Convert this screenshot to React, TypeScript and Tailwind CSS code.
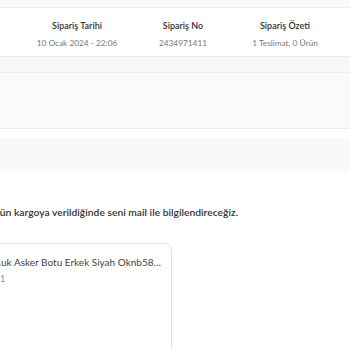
import React from "react";

function App() {
    const font = { fontFamily: "'Source Sans Pro', Lato, 'Noto Sans', sans-serif" };
    return (
        <div className="w-[350px] h-[350px] overflow-hidden bg-[#fafafa]" style={font}>
            <div className="h-[7px]"></div>
            <div className="h-[50px] bg-white border-y border-[#ebebeb] relative">
                <div className="absolute left-[27px] top-[11px] w-[100px] text-center">
                    <div className="text-[9px] font-semibold text-[#333]">Sipariş Tarihi</div>
                    <div className="text-[8.3px] text-[#777] mt-[4px]">10 Ocak 2024 - 22:06</div>
                </div>
                <div className="absolute left-[133px] top-[11px] w-[100px] text-center">
                    <div className="text-[9px] font-semibold text-[#333]">Sipariş No</div>
                    <div className="text-[8.3px] text-[#777] mt-[4px]">2434971411</div>
                </div>
                <div className="absolute left-[235px] top-[11px] w-[100px] text-center">
                    <div className="text-[9px] font-semibold text-[#333]">Sipariş Özeti</div>
                    <div className="text-[8.3px] text-[#777] mt-[4px]">1 Teslimat, 0 Ürün</div>
                </div>
            </div>
            <div className="h-[15px] bg-[#f8f8f8]"></div>
            <div className="h-[57px] bg-[#fafafa] border-y border-[#ebebeb]"></div>
            <div className="bg-white">
                <div className="h-[10px]"></div>
                <div className="h-[32px] bg-[#f9f9f9]"></div>
                <div className="h-[180px] overflow-hidden">
                    <div className="mt-[34px] -ml-[23px] whitespace-nowrap text-[10.3px] leading-[14px] font-semibold text-[#333]">
                        Ürünün kargoya verildiğinde seni mail ile bilgilendireceğiz.
                    </div>
                    <div className="mt-[24px] -ml-[20px] w-[192px] h-[140px] border border-[#e6e6e6] rounded-md">
                        <div className="pl-[10px] pt-[11px] w-[180px]">
                            <div className="text-[10px] text-[#444] whitespace-nowrap overflow-hidden text-ellipsis" dir="rtl">
                                <span dir="ltr">Soğuk Asker Botu Erkek Siyah Oknb58…</span>
                            </div>
                            <div className="text-[8.5px] text-[#888] mt-[3px] -ml-[13px] whitespace-nowrap">Adet: 1</div>
                        </div>
                    </div>
                </div>
            </div>
        </div>
    );
}

export default App;
